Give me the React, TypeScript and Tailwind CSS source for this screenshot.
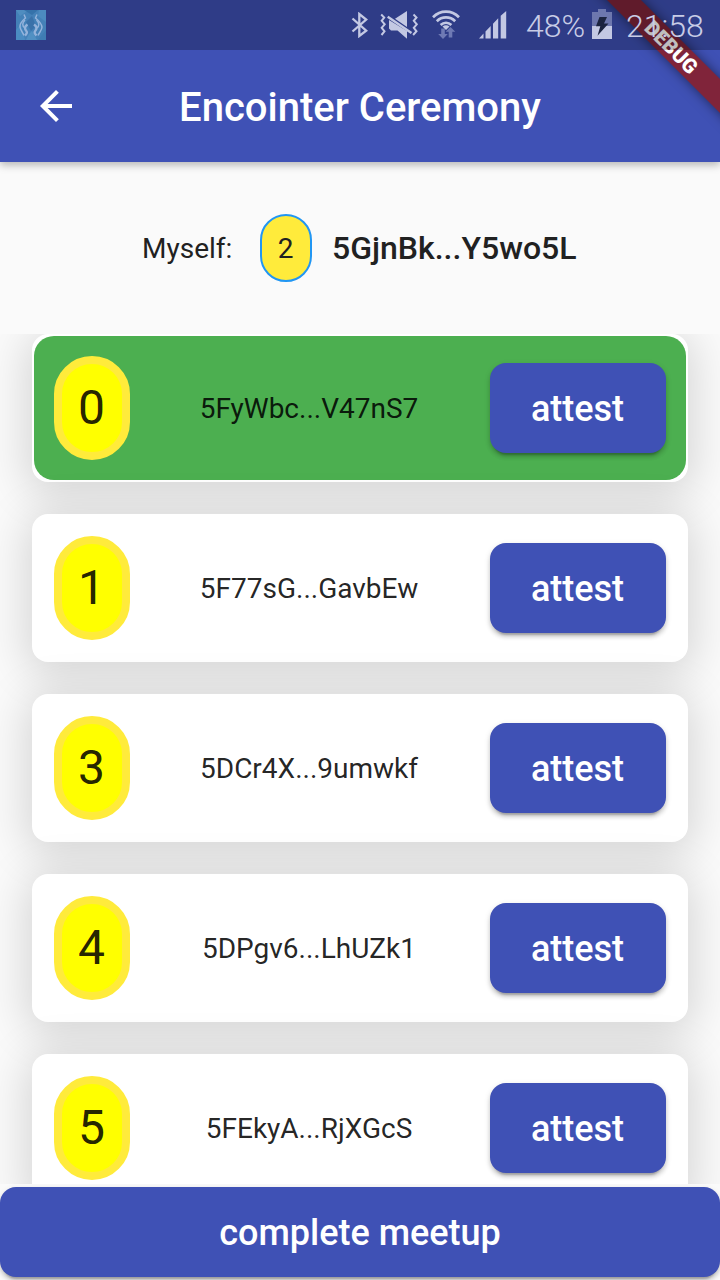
import React from "react";

const attestees = [
  { id: 0, address: "5FyWbc...V47nS7", done: true },
  { id: 1, address: "5F77sG...GavbEw", done: false },
  { id: 3, address: "5DCr4X...9umwkf", done: false },
  { id: 4, address: "5DPgv6...LhUZk1", done: false },
  { id: 5, address: "5FEkyA...RjXGcS", done: false },
];

const buttonShadow =
  "shadow-[0_6px_2px_-4px_rgba(0,0,0,0.2),0_4px_4px_rgba(0,0,0,0.14),0_2px_6px_rgba(0,0,0,0.12)]";

function AppThumb() {
  return (
    <svg width="30" height="30" viewBox="0 0 30 30" className="block">
      <rect width="30" height="30" fill="#4481b8" />
      <path d="M0 0h13L4 6z" fill="#4f8dc0" />
      <path d="M8 0h14l-6 5z" fill="#3572aa" />
      <path d="M23 0h7v12l-8-6z" fill="#4c8abf" />
      <path d="M10 12l6-6 4 10-5 5z" fill="#3a71a9" />
      <path d="M0 20l5-6 4 16H0z" fill="#4b8cc2" />
      <path d="M22 30l8-10v10z" fill="#3f7cb3" />
      <path d="M13 24l3-3 5 9H10z" fill="#5190c3" />
      <g fill="none" stroke="#a3bce2" strokeWidth="1.5" opacity=".85">
        <path d="M8 4.500l1.500 3.500c-3 2.500-6 5-5.500 9 .4 3 2.500 5 4 8.500" />
        <path d="M9 10c-3 3-3 6 0 8" />
        <path d="M11.500 14.500c-3 2-3 4-1.500 6 1.500 1.500 1.200 3-1 5" strokeWidth="2.400" />
        <path d="M21 4.500l-1.500 3.500c3 2.500 6 5 6.500 9 0 3-2.500 5-4 8.500" />
        <path d="M20.500 10c3 3 3 6 .5 8" />
        <path d="M18 14.500c3 2 3 4 1.500 6-1.500 1.500-1.200 3 1 5" strokeWidth="2.400" />
      </g>
    </svg>
  );
}

function BluetoothIcon() {
  return (
    <svg width="18" height="26" viewBox="0 0 18 26" fill="none" stroke="#c3c8e3" strokeWidth="2.3" className="block">
      <path d="M1.500 6.500l13.700 12.200L8.300 24V2l6.900 5.500L1.500 19.500" />
    </svg>
  );
}

function MuteIcon() {
  return (
    <svg width="39" height="28" viewBox="0 0 39 28" className="block">
      <g fill="none" stroke="#c3c8e3" strokeWidth="2">
        <path d="M1.200 3.500l3 3-2.500 3.300 3 3.500-3 3.500 2.800 3.500-3 3.700" />
        <path d="M33.500 3.500l3 3-2.700 3.300 3 3.500-3 3.500 2.700 3.500-3.400 3.700" />
      </g>
      <path d="M15 7.800L27 0v16z" fill="#c3c8e3" />
      <path d="M9 9L27 20v7.800L17.500 19.500H11L9 17.500z" fill="#c3c8e3" />
      <path d="M7.700 5.800L31.500 22" stroke="#c3c8e3" strokeWidth="2.400" />
    </svg>
  );
}

function WifiIcon() {
  return (
    <svg width="28" height="30" viewBox="0 0 28 30" className="block">
      <g fill="none" stroke="#c3c8e3" strokeWidth="2.700">
        <path d="M1 8.200C8.400.8 19.600.8 27 8.200" />
        <path d="M4.800 12.200c5.200-5 13.200-5 18.400 0" />
        <path d="M8.600 16c3.200-2.900 7.600-2.900 10.800 0" />
      </g>
      <path d="M9.200 19.500h3.600v5.500h3L11 30l-4.800-5h3zM16.700 28.500h3.600v-5.800h3L18.500 18l-4.800 4.700h3z" fill="#6f7ab4" />
      <path d="M10.500 17.500c2-1.700 5-1.700 7 0l-3.500 3.500z" fill="#c3c8e3" />
    </svg>
  );
}

function SignalIcon() {
  return (
    <svg width="28" height="28" viewBox="0 0 28 28" fill="#c3c8e3" className="block">
      <path d="M0 27.500l4.500-5v5zM6.500 20.500l5.200-5.500v12.500H6.500zM14 12.800l5.200-5.500v20.200H14zM21.700 4.800L27.200 0v27.500h-5.500z" />
    </svg>
  );
}

function BatteryIcon() {
  return (
    <svg width="20" height="30" viewBox="0 0 20 30" className="block">
      <path d="M6 0h8v3h6v14H0V3h6z" fill="#6d77ae" />
      <path d="M0 17h20v13H0z" fill="#c3c8e3" />
      <path d="M7.500 8h7.500l-3 6.500h4.500L5.500 26.800l2.800-9.600H4z" fill="#1c2440" />
    </svg>
  );
}

function StatusBar() {
  return (
    <div className="absolute inset-x-0 top-0 z-20 flex h-[50px] items-start bg-black/25 text-[32px] leading-[50px] font-light text-[#c8cce6]">
      <div className="ml-4 mt-[10px]"><AppThumb /></div>
      <div className="ml-[305px] mt-3"><BluetoothIcon /></div>
      <div className="ml-[11px] mt-[11px]"><MuteIcon /></div>
      <div className="ml-[13px] mt-[9px]"><WifiIcon /></div>
      <div className="ml-[19px] mt-[11px]"><SignalIcon /></div>
      <div className="ml-[19px] mt-[1px] w-[60px] whitespace-nowrap">48%</div>
      <div className="ml-[6px] mt-[9px]"><BatteryIcon /></div>
      <div className="ml-[14px] mt-[1px] whitespace-nowrap">21:58</div>
    </div>
  );
}

function DebugBanner() {
  return (
    <div className="pointer-events-none absolute top-0 right-0 z-10 h-[170px] w-[170px] overflow-hidden">
      <div className="absolute top-[36px] left-[2px] flex h-6 w-[240px] rotate-45 items-center justify-center bg-[#80243a] pr-[2px] text-[20.4px] leading-none font-black text-white shadow-[0_0_12px_rgba(0,0,0,0.5)]">
        DEBUG
      </div>
    </div>
  );
}

function AttestButton() {
  return (
    <button className={"h-[90px] w-[176px] shrink-0 rounded-2xl bg-[#3f51b5] pt-[2px] pr-[1px] text-[36px] font-medium text-white " + buttonShadow}>
      attest
    </button>
  );
}

export default function App() {
  return (
    <div className="relative flex h-[1280px] w-[720px] flex-col overflow-hidden bg-[#fafafa] font-['Roboto',sans-serif] text-[#212121]">
      <StatusBar />
      <DebugBanner />
      <header className="relative flex h-[162px] shrink-0 items-center bg-[#3f51b5] px-10 pt-[50px] text-white shadow-[0_3px_8px_rgba(0,0,0,0.28)]">
        <svg width="32" height="32" viewBox="4 4 16 16" fill="#fff">
          <path d="M20 11H7.830l5.590-5.590L12 4l-8 8 8 8 1.410-1.410L7.830 13H20v-2z" />
        </svg>
        <h1 className="mr-8 flex-1 pt-1 text-center text-[40px] font-medium">Encointer Ceremony</h1>
      </header>
      <section className="flex h-[172px] shrink-0 items-center pl-[142px]">
        <span className="w-[118px] pt-[2px] text-[28px]">Myself:</span>
        <span className="flex h-[68px] w-[52px] items-center justify-center rounded-full border-2 border-[#2196f3] bg-[#ffeb3b] pt-[2px] pr-[1px] text-[28px]">2</span>
        <span className="ml-5 text-[32px] font-medium">5GjnBk...Y5wo5L</span>
      </section>
      <main className="flex h-[850px] shrink-0 flex-col gap-8 overflow-hidden px-8">
        {attestees.map((a) => (
          <div key={a.id} className="relative h-[148px] shrink-0 rounded-2xl bg-white p-[2px] shadow-[0_6px_44px_6px_rgba(0,0,0,0.15)]">
            <div className={"flex h-full items-center rounded-[20px] px-5 text-black/87 " + (a.done ? "bg-[#4caf50]" : "bg-transparent")}>
              <span className="flex h-[104px] w-[76px] shrink-0 items-center justify-center rounded-full border-8 border-[#ffeb3b] bg-[#ffff00] pr-[1px] text-[48px]">{a.id}</span>
              <span className="flex-1 pt-[2px] pr-[2px] text-center text-[28px]">{a.address}</span>
              <AttestButton />
            </div>
          </div>
        ))}
      </main>
      <footer className="h-24 shrink-0 pt-[3px]">
        <button className={"h-[90px] w-full rounded-2xl bg-[#3f51b5] pt-[2px] text-[36px] font-medium text-white " + buttonShadow}>
          complete meetup
        </button>
      </footer>
    </div>
  );
}
